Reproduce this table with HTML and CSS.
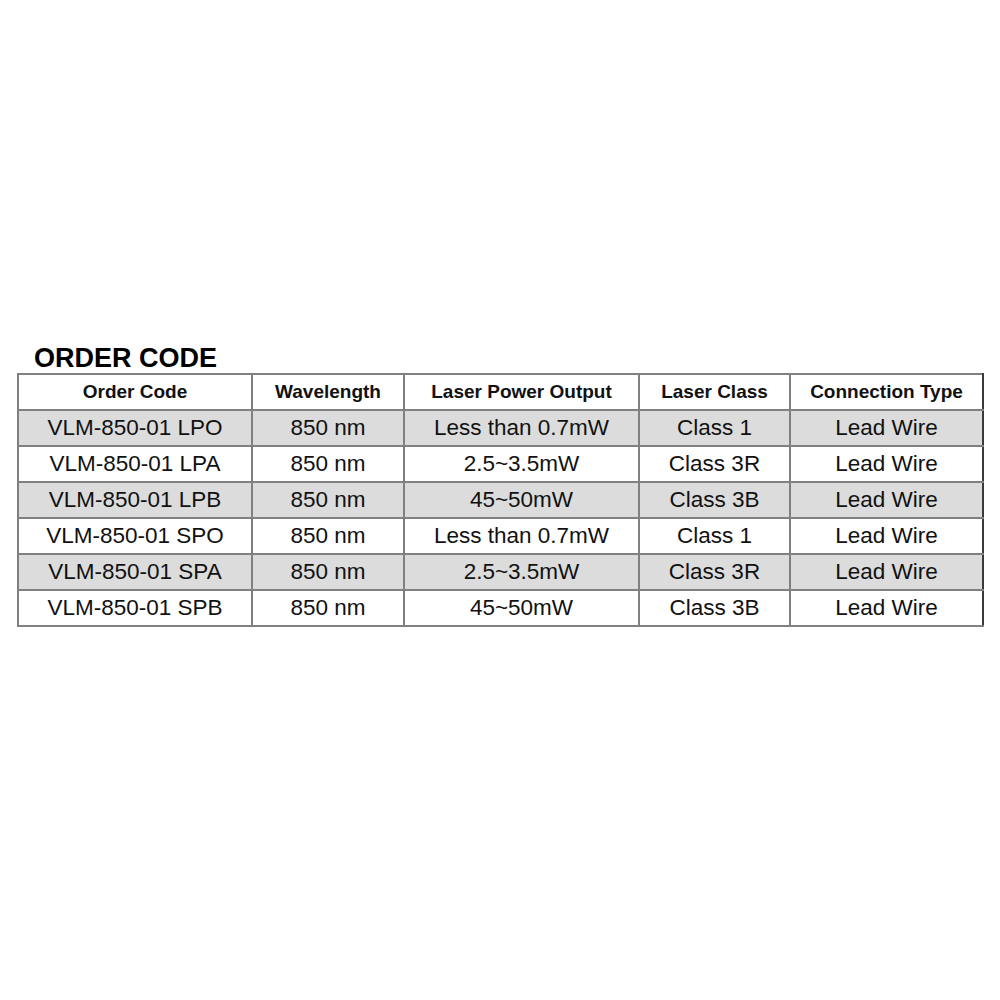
FILE: index.html
```html
<!DOCTYPE html>
<html>
<head>
<meta charset="utf-8">
<link rel="stylesheet" href="styles.css">
</head>
<body>
<div class="page">
  <h1 class="title">ORDER CODE</h1>
  <table class="codes">
    <colgroup>
      <col class="c1"><col class="c2"><col class="c3"><col class="c4"><col class="c5">
    </colgroup>
    <thead>
      <tr><th>Order Code</th><th>Wavelength</th><th>Laser Power Output</th><th>Laser Class</th><th>Connection Type</th></tr>
    </thead>
    <tbody>
      <tr class="shade"><td>VLM-850-01 LPO</td><td>850 nm</td><td>Less than 0.7mW</td><td>Class 1</td><td>Lead Wire</td></tr>
      <tr><td>VLM-850-01 LPA</td><td>850 nm</td><td>2.5~3.5mW</td><td>Class 3R</td><td>Lead Wire</td></tr>
      <tr class="shade"><td>VLM-850-01 LPB</td><td>850 nm</td><td>45~50mW</td><td>Class 3B</td><td>Lead Wire</td></tr>
      <tr><td>VLM-850-01 SPO</td><td>850 nm</td><td>Less than 0.7mW</td><td>Class 1</td><td>Lead Wire</td></tr>
      <tr class="shade"><td>VLM-850-01 SPA</td><td>850 nm</td><td>2.5~3.5mW</td><td>Class 3R</td><td>Lead Wire</td></tr>
      <tr><td>VLM-850-01 SPB</td><td>850 nm</td><td>45~50mW</td><td>Class 3B</td><td>Lead Wire</td></tr>
    </tbody>
  </table>
</div>
</body>
</html>
```
FILE: styles.css
```css
html, body {
  margin: 0;
  padding: 0;
  background: #ffffff;
}
.page {
  padding: 343px 17px 0 17px;
  font-family: "Liberation Sans", Arial, sans-serif;
  color: #111111;
}
.title {
  margin: 0 0 0 17px;
  font-size: 27px;
  line-height: 30px;
  font-weight: bold;
  color: #000000;
}
.codes {
  width: 965px;
  border-collapse: collapse;
  table-layout: fixed;
}
.c1 { width: 234px; }
.c2 { width: 152px; }
.c3 { width: 235px; }
.c4 { width: 151px; }
.c5 { width: 193px; }
.codes th, .codes td {
  border: 2px solid #808080;
  padding: 0;
  text-align: center;
  white-space: nowrap;
}
.codes th {
  height: 34px;
  font-size: 19px;
  font-weight: bold;
  color: #111111;
}
.codes td {
  height: 34px;
  font-size: 22.5px;
  color: #111111;
}
.codes td:last-child, .codes th:last-child {
  border-right-color: #3a3a3a;
}
.shade td {
  background: #dcdcdc;
}
```
